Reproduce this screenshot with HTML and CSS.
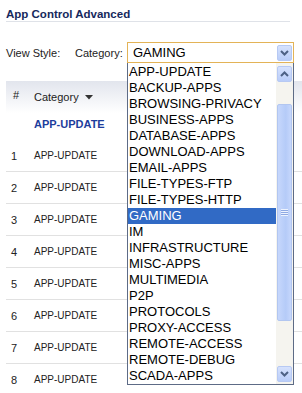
FILE: index.html
```html
<!DOCTYPE html>
<html lang="en">
<head>
  <meta charset="UTF-8" />
  <meta name="viewport" content="width=device-width, initial-scale=1.0" />
  <title>App Control Advanced</title>
  <link rel="stylesheet" href="styles.css">
</head>
<body>
  <div class="page">
    <h1 class="title">App Control Advanced</h1>

    <div class="view-row">
      <span class="label view-label">View Style:</span>
      <span class="label cat-label">Category:</span>
      <div class="select">
        <span class="select-value">GAMING</span>
        <span class="select-btn">
          <svg width="9" height="6" viewBox="0 0 9 6"><path d="M1 1 L4.5 4.5 L8 1" fill="none" stroke="#4d6185" stroke-width="2"/></svg>
        </span>
      </div>
    </div>

    <div class="grid">
      <div class="grid-head">
        <span class="col-num">#</span>
        <span class="col-cat">Category
          <svg class="sort" width="8" height="5" viewBox="0 0 8 5"><path d="M0 0 H8 L4 4.5 Z" fill="#333"/></svg>
        </span>
      </div>
      <div class="group-row">APP-UPDATE</div>
      <div class="row"><span class="col-num">1</span><span class="col-cat">APP-UPDATE</span></div>
      <div class="row"><span class="col-num">2</span><span class="col-cat">APP-UPDATE</span></div>
      <div class="row"><span class="col-num">3</span><span class="col-cat">APP-UPDATE</span></div>
      <div class="row"><span class="col-num">4</span><span class="col-cat">APP-UPDATE</span></div>
      <div class="row"><span class="col-num">5</span><span class="col-cat">APP-UPDATE</span></div>
      <div class="row"><span class="col-num">6</span><span class="col-cat">APP-UPDATE</span></div>
      <div class="row"><span class="col-num">7</span><span class="col-cat">APP-UPDATE</span></div>
      <div class="row"><span class="col-num">8</span><span class="col-cat">APP-UPDATE</span></div>
    </div>

    <!-- open dropdown of the category select -->
    <div class="dropdown">
      <ul class="options">
        <li>APP-UPDATE</li>
        <li>BACKUP-APPS</li>
        <li>BROWSING-PRIVACY</li>
        <li>BUSINESS-APPS</li>
        <li>DATABASE-APPS</li>
        <li>DOWNLOAD-APPS</li>
        <li>EMAIL-APPS</li>
        <li>FILE-TYPES-FTP</li>
        <li>FILE-TYPES-HTTP</li>
        <li class="selected">GAMING</li>
        <li>IM</li>
        <li>INFRASTRUCTURE</li>
        <li>MISC-APPS</li>
        <li>MULTIMEDIA</li>
        <li>P2P</li>
        <li>PROTOCOLS</li>
        <li>PROXY-ACCESS</li>
        <li>REMOTE-ACCESS</li>
        <li>REMOTE-DEBUG</li>
        <li>SCADA-APPS</li>
      </ul>
      <div class="scrollbar">
        <span class="sb-btn">
          <svg width="9" height="6" viewBox="0 0 9 6"><path d="M1 5 L4.5 1.5 L8 5" fill="none" stroke="#4d6185" stroke-width="2"/></svg>
        </span>
        <div class="sb-track">
          <div class="sb-thumb"><span class="grip"></span></div>
        </div>
        <span class="sb-btn">
          <svg width="9" height="6" viewBox="0 0 9 6"><path d="M1 1 L4.5 4.5 L8 1" fill="none" stroke="#4d6185" stroke-width="2"/></svg>
        </span>
      </div>
    </div>
  </div>
</body>
</html>
```

FILE: styles.css
```css
* {
  box-sizing: border-box;
  margin: 0;
  padding: 0;
}

body {
  background: #fff;
  font-family: 'Liberation Sans', Arial, sans-serif;
  color: #000;
  width: 302px;
  height: 393px;
  overflow: hidden;
}

.page {
  position: relative;
  padding-top: 7px;
}

.title {
  margin: 0 12px 0 6px;
  font-size: 11.5px;
  font-weight: bold;
  color: #16285c;
  line-height: 14px;
  border-bottom: 1px solid #dfe2e8;
}

.view-row {
  display: flex;
  align-items: center;
  height: 21px;
  margin-top: 20px;
  padding-left: 6px;
}

.label {
  font-size: 11px;
  color: #222;
}

.view-label {
  width: 69px;
}

.cat-label {
  width: 52px;
}

.select {
  width: 167px;
  height: 21px;
  border: 1px solid #e3b357;
  display: flex;
  align-items: center;
  justify-content: space-between;
  padding: 0 1px 0 5px;
}

.select-value {
  font-size: 13px;
}

.select-btn,
.sb-btn {
  width: 15px;
  height: 16px;
  border: 1px solid #b7c9f3;
  border-radius: 2px;
  background: linear-gradient(#d6e2fd, #b9cdf9);
  display: flex;
  align-items: center;
  justify-content: center;
}

.grid {
  margin: 18px 0 0 6px;
}

.grid-head {
  display: flex;
  align-items: center;
  height: 32px;
  color: #222;
  background: linear-gradient(#e2e5ed, #fff);
}

.col-num {
  width: 28px;
  padding-left: 5px;
  font-size: 11px;
}

.grid-head .col-num {
  padding-left: 7px;
  padding-bottom: 4px;
}

.col-cat {
  font-size: 10px;
}

.grid-head .col-cat {
  font-size: 11px;
}

.sort {
  margin-left: 3px;
  vertical-align: 1px;
}

.group-row {
  height: 27px;
  padding-left: 28px;
  font-size: 11px;
  font-weight: bold;
  color: #1d3d9c;
  line-height: 23px;
}

.row {
  display: flex;
  align-items: center;
  height: 32px;
  border-bottom: 1px solid #e1e1e1;
  color: #222;
}

.dropdown {
  position: absolute;
  left: 127px;
  top: 63px;
  width: 167px;
  height: 322px;
  background: #fff;
  border: 1px solid #5d6b86;
  border-top: none;
  display: flex;
}

.options {
  list-style: none;
  flex: 1;
  padding-top: 1px;
}

.options li {
  height: 16px;
  line-height: 16px;
  font-size: 13px;
  padding-left: 1px;
  white-space: nowrap;
}

.options li.selected {
  background: #316ac5;
  color: #fff;
}

.scrollbar {
  width: 17px;
  display: flex;
  flex-direction: column;
  align-items: center;
  padding: 3px 0 2px;
  background: #f5f4ef;
}

.sb-track {
  flex: 1;
  width: 100%;
  padding: 22px 1px 45px;
}

.sb-thumb {
  height: 100%;
  border: 1px solid #b2c6f0;
  border-radius: 2px;
  background: linear-gradient(90deg, #c6d7fc, #b5cbf8 60%, #c6d7fc);
  display: flex;
  align-items: center;
  justify-content: center;
}

.grip {
  width: 7px;
  height: 7px;
  background: repeating-linear-gradient(#eef3fe 0 1px, #8fa9e3 1px 2px);
}
```
